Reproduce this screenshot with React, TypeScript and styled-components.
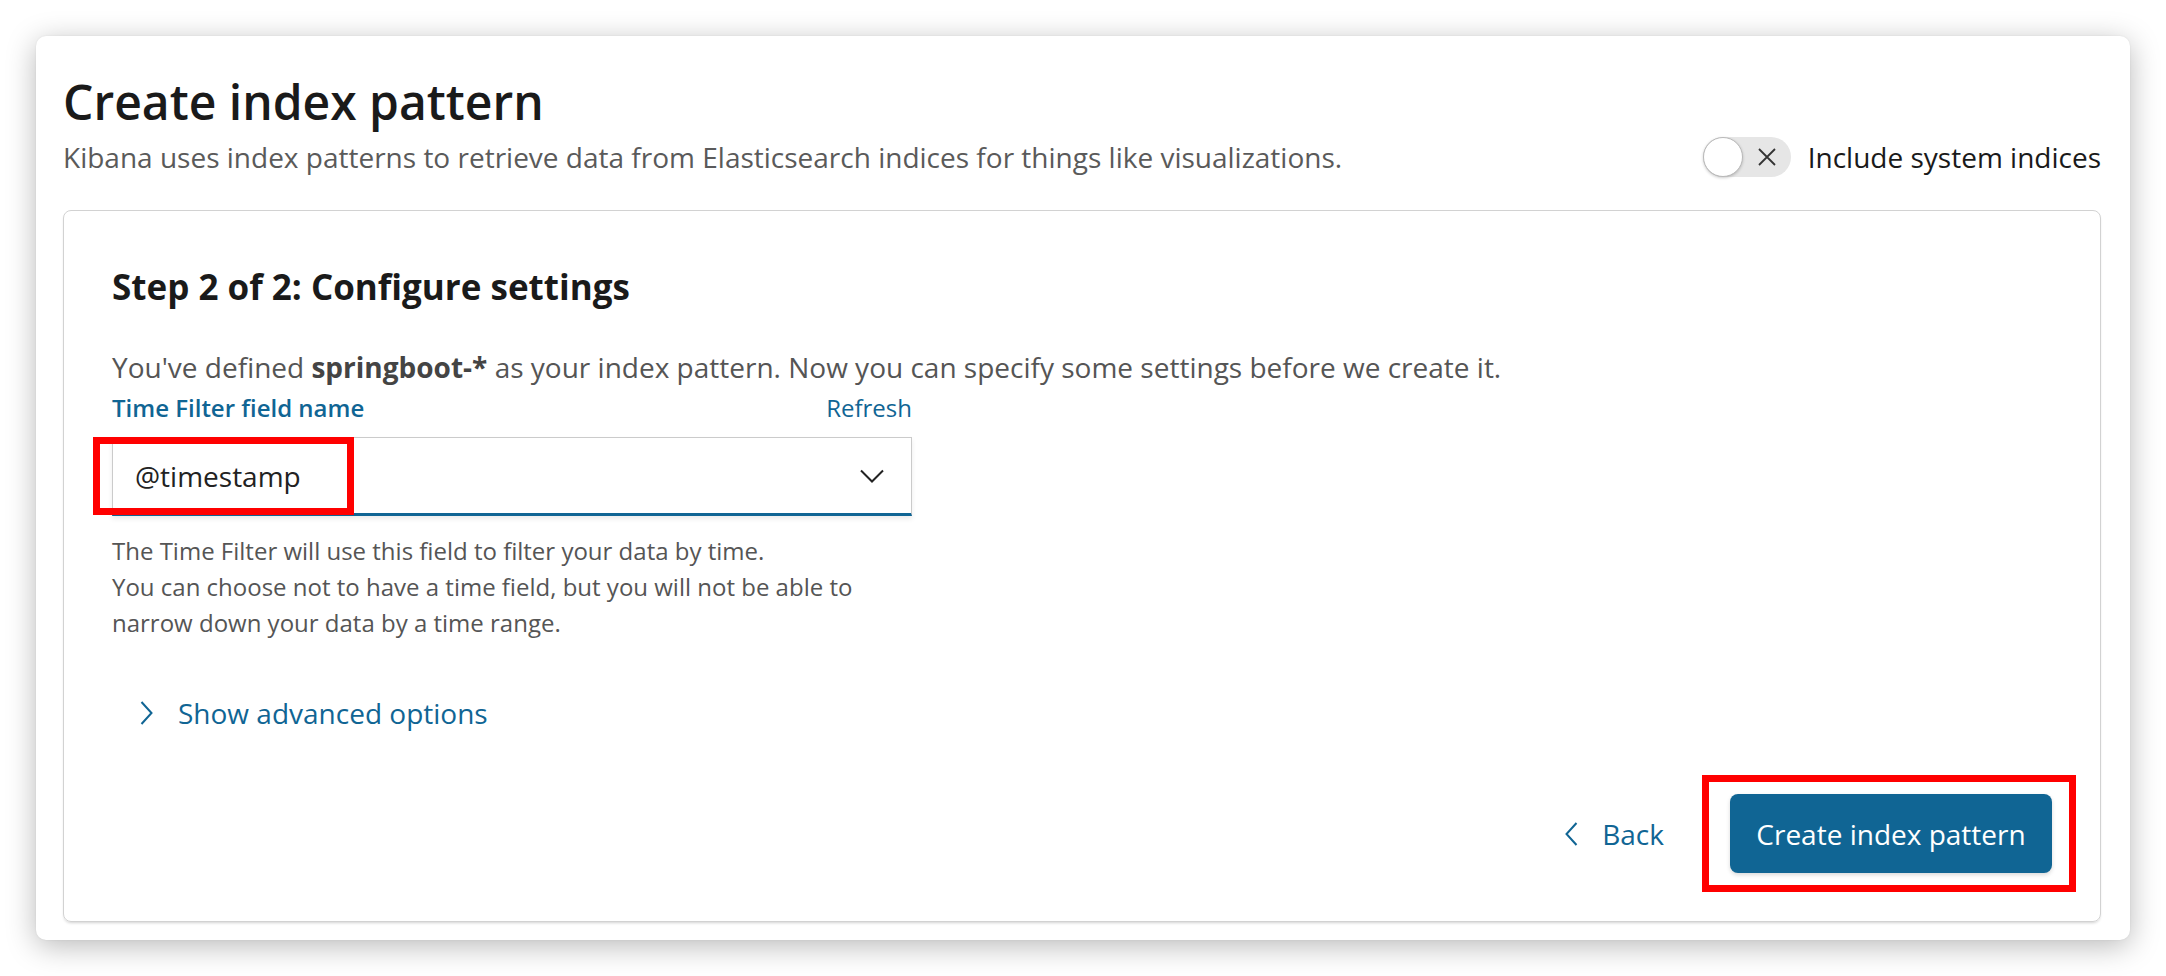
import React from "react";
import styled, { createGlobalStyle } from "styled-components";

const GlobalStyle = createGlobalStyle`
  html, body {
    margin: 0;
    padding: 0;
    background: #ffffff;
    font-family: "Open Sans", "Noto Sans", sans-serif;
  }
  * { box-sizing: border-box; }
`;

const BLUE = "#106594";

const Page = styled.div`
  height: 976px;
  padding: 36px;
`;

const Card = styled.div`
  height: 100%;
  background: #fff;
  border-radius: 10px;
  box-shadow: 0 6px 30px rgba(0, 0, 0, 0.28), 0 0 2px rgba(0, 0, 0, 0.08);
  padding: 38px 29px 18px 27px;
  display: flex;
  flex-direction: column;
`;

const Title = styled.h1`
  margin: 0;
  font-size: 48px;
  line-height: 56px;
  font-weight: 600;
  color: #1a1a1a;
`;

const HeaderRow = styled.div`
  margin-top: 7px;
  height: 40px;
  display: flex;
  align-items: center;
  justify-content: space-between;
`;

const Subtitle = styled.p`
  margin: 0;
  font-size: 28px;
  line-height: 40px;
  color: #5a5a5a;
`;

const ToggleGroup = styled.label`
  display: flex;
  align-items: center;
  gap: 17px;
`;

const Switch = styled.span`
  width: 88px;
  height: 40px;
  border-radius: 20px;
  background: #e6e6e6;
  display: flex;
  align-items: center;
`;

const Knob = styled.span`
  width: 40px;
  height: 40px;
  border-radius: 50%;
  background: #fff;
  border: 1px solid #b9b9b9;
  box-shadow: 0 1px 3px rgba(0, 0, 0, 0.2);
  flex: none;
`;

const SwitchIcon = styled.span`
  flex: 1;
  display: flex;
  justify-content: center;
  align-items: center;
`;

const ToggleLabel = styled.span`
  font-size: 28px;
  line-height: 40px;
  color: #1a1a1a;
`;

const Panel = styled.section`
  margin-top: 33px;
  flex: 1;
  border: 1px solid #d2d2d2;
  border-radius: 8px;
  box-shadow: 0 2px 3px -1px rgba(0, 0, 0, 0.18);
  padding: 54px 48px 48px;
  display: flex;
  flex-direction: column;
`;

const StepTitle = styled.h2`
  margin: 0;
  font-size: 35px;
  line-height: 44px;
  font-weight: 700;
  color: #1a1a1a;
`;

const Intro = styled.p`
  margin: 38px 0 0;
  font-size: 28px;
  line-height: 40px;
  color: #555;
  strong {
    color: #444;
    font-weight: 700;
  }
`;

const Field = styled.div`
  width: 800px;
`;

const LabelRow = styled.div`
  margin-top: 5px;
  display: flex;
  justify-content: space-between;
  align-items: baseline;
  line-height: 32px;
`;

const FieldLabel = styled.span`
  font-size: 24px;
  font-weight: 600;
  color: ${BLUE};
`;

const LinkText = styled.span`
  font-size: 24px;
  color: ${BLUE};
`;

const Select = styled.div`
  position: relative;
  margin-top: 13px;
  height: 79px;
  border: 1px solid #cbcbcb;
  border-bottom: 3px solid ${BLUE};
  box-shadow: 0 3px 5px rgba(0, 0, 0, 0.08);
  display: flex;
  align-items: center;
  justify-content: space-between;
  padding: 0 27px 0 22px;
  background: #fff;
`;

const SelectValue = styled.span`
  font-size: 28px;
  line-height: 40px;
  color: #222;
`;

const RedFrame = styled.span<{ $l: number; $t: number; $r: number; $b: number }>`
  position: absolute;
  left: ${(p) => p.$l}px;
  top: ${(p) => p.$t}px;
  right: ${(p) => p.$r}px;
  bottom: ${(p) => p.$b}px;
  border: 7px solid #ff0000;
  pointer-events: none;
`;

const TimestampFrame = styled.span`
  position: absolute;
  left: -20px;
  top: -1px;
  width: 261px;
  height: 78px;
  border: 7px solid #ff0000;
  pointer-events: none;
`;

const HelpText = styled.p`
  margin: 17px 0 0;
  font-size: 24px;
  line-height: 36px;
  color: #555;
`;

const AdvancedToggle = styled.button`
  margin-top: 52px;
  align-self: flex-start;
  display: flex;
  align-items: center;
  gap: 25px;
  padding: 0 0 0 28px;
  border: 0;
  background: none;
  font-family: inherit;
  font-size: 28px;
  line-height: 40px;
  color: ${BLUE};
`;

const Footer = styled.div`
  margin-top: auto;
  display: flex;
  justify-content: flex-end;
  align-items: center;
`;

const BackButton = styled.button`
  display: flex;
  align-items: center;
  gap: 24px;
  margin-right: 66px;
  padding: 0;
  border: 0;
  background: none;
  font-family: inherit;
  font-size: 28px;
  line-height: 40px;
  color: ${BLUE};
`;

const PrimaryWrap = styled.div`
  position: relative;
`;

const PrimaryButton = styled.button`
  height: 79px;
  width: 322px;
  padding: 0;
  border: 0;
  border-radius: 8px;
  background: ${BLUE};
  color: #fff;
  font-family: inherit;
  font-size: 28px;
  line-height: 40px;
  box-shadow: 0 2px 4px rgba(0, 0, 0, 0.15);
`;

const XIcon = () => (
  <svg width="20" height="20" viewBox="0 0 20 20" fill="none" stroke="#333" strokeWidth="1.8">
    <path d="M2 2 L18 18 M18 2 L2 18" />
  </svg>
);

const ChevronDown = () => (
  <svg width="24" height="14" viewBox="0 0 24 14" fill="none" stroke="#222" strokeWidth="2">
    <path d="M1 1.5 L12 12.5 L23 1.5" />
  </svg>
);

const ChevronRight = () => (
  <svg width="13" height="24" viewBox="0 0 13 24" fill="none" stroke={BLUE} strokeWidth="2">
    <path d="M1.5 1 L11.5 12 L1.5 23" />
  </svg>
);

const ChevronLeft = () => (
  <svg width="13" height="24" viewBox="0 0 13 24" fill="none" stroke={BLUE} strokeWidth="2">
    <path d="M11.5 1 L1.5 12 L11.5 23" />
  </svg>
);

export default function App() {
  return (
    <>
      <GlobalStyle />
      <Page>
        <Card>
          <Title>Create index pattern</Title>
          <HeaderRow>
            <Subtitle>
              Kibana uses index patterns to retrieve data from Elasticsearch indices for things like visualizations.
            </Subtitle>
            <ToggleGroup>
              <Switch>
                <Knob />
                <SwitchIcon>
                  <XIcon />
                </SwitchIcon>
              </Switch>
              <ToggleLabel>Include system indices</ToggleLabel>
            </ToggleGroup>
          </HeaderRow>
          <Panel>
            <StepTitle>Step 2 of 2: Configure settings</StepTitle>
            <Intro>
              You've defined <strong>springboot-*</strong> as your index pattern. Now you can specify some settings
              before we create it.
            </Intro>
            <Field>
              <LabelRow>
                <FieldLabel>Time Filter field name</FieldLabel>
                <LinkText>Refresh</LinkText>
              </LabelRow>
              <Select>
                <SelectValue>@timestamp</SelectValue>
                <ChevronDown />
                <TimestampFrame />
              </Select>
              <HelpText>
                The Time Filter will use this field to filter your data by time.
                <br />
                You can choose not to have a time field, but you will not be able to
                <br />
                narrow down your data by a time range.
              </HelpText>
            </Field>
            <AdvancedToggle>
              <ChevronRight />
              Show advanced options
            </AdvancedToggle>
            <Footer>
              <BackButton>
                <ChevronLeft />
                Back
              </BackButton>
              <PrimaryWrap>
                <PrimaryButton>Create index pattern</PrimaryButton>
                <RedFrame $l={-28} $t={-19} $r={-24} $b={-19} />
              </PrimaryWrap>
            </Footer>
          </Panel>
        </Card>
      </Page>
    </>
  );
}
